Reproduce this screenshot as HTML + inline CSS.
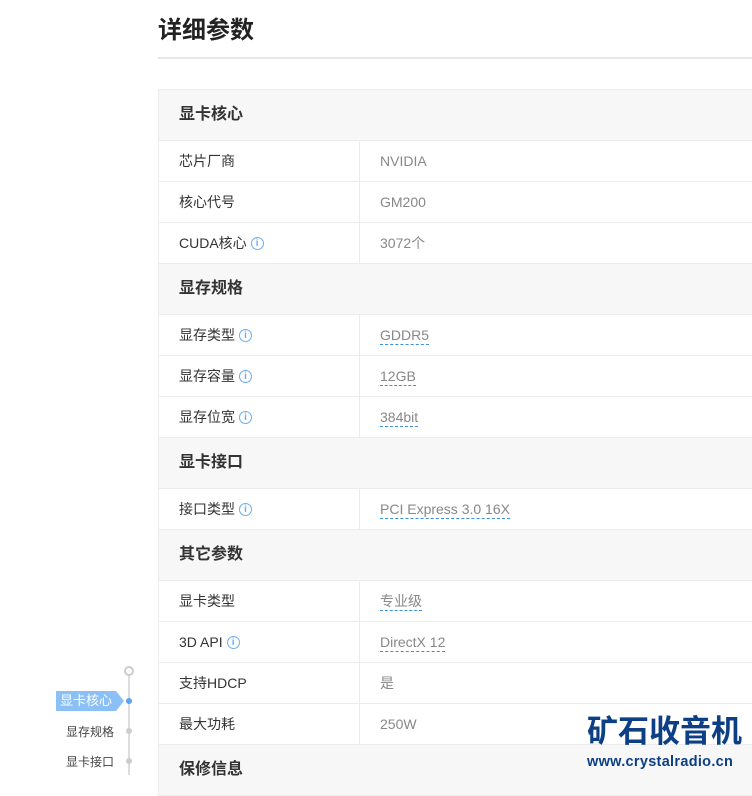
<!DOCTYPE html><html><head><meta charset="utf-8"><style>
*{margin:0;padding:0;box-sizing:border-box}
body{width:752px;height:775px;overflow:hidden;background:#fff;font-family:"Liberation Sans","Noto Sans CJK SC",sans-serif;position:relative}
h1{position:absolute;left:158px;top:10px;font-size:24px;font-weight:bold;color:#222}
.hr{position:absolute;left:158px;top:57px;width:594px;height:2px;background:#e6e6e6}
.tbl{position:absolute;left:158px;top:89px;width:620px;border-left:1px solid #ececec;border-top:1px solid #ececec}
.h{height:51px;background:#f7f7f7;border-bottom:1px solid #ececec;font-size:16px;font-weight:bold;color:#333;line-height:50px;padding-left:20px}
.r{height:41px;border-bottom:1px solid #ececec;display:flex;font-size:14px;line-height:40px}
.r .l{width:201px;border-right:1px solid #ececec;padding-left:20px;color:#333;display:flex;align-items:center}
.r .v{padding-left:20px;color:#888}
.u{border-bottom:1px dashed #3d8fe0;line-height:18px;display:inline-block}
.i{display:inline-block;width:13px;height:13px;border:1px solid #6aaef0;border-radius:50%;color:#6aaef0;font-size:10px;line-height:11px;text-align:center;margin-left:4px;font-weight:bold}
.side{position:absolute;left:128px;top:675px;width:2px;height:100px;background:#ddd}
.c{position:absolute;border-radius:50%}
.tag{position:absolute;left:56px;top:691px;width:60px;height:20px;background:#8bc0f7;color:#fff;font-size:13px;line-height:20px;text-align:center}
.tag:after{content:"";position:absolute;right:-8px;top:0;border-left:8px solid #8bc0f7;border-top:10px solid transparent;border-bottom:10px solid transparent}
.sl{position:absolute;left:66px;font-size:12px;color:#444}
.logo{position:absolute;left:587px;top:710px;font-size:31px;font-weight:bold;color:#0d3f85;letter-spacing:0;font-family:"Noto Sans CJK SC",sans-serif;line-height:38px}
.url{position:absolute;left:587px;top:754px;font-size:14.5px;font-weight:bold;color:#0d3f85;letter-spacing:0.3px}
</style></head><body>
<h1>详细参数</h1><div class="hr"></div>
<div class="tbl">
<div class="h">显卡核心</div>
<div class="r"><div class="l">芯片厂商</div><div class="v">NVIDIA</div></div>
<div class="r"><div class="l">核心代号</div><div class="v">GM200</div></div>
<div class="r"><div class="l">CUDA核心<span class="i">i</span></div><div class="v">3072个</div></div>
<div class="h">显存规格</div>
<div class="r"><div class="l">显存类型<span class="i">i</span></div><div class="v"><span class="u">GDDR5</span></div></div>
<div class="r"><div class="l">显存容量<span class="i">i</span></div><div class="v"><span class="u">12GB</span></div></div>
<div class="r"><div class="l">显存位宽<span class="i">i</span></div><div class="v"><span class="u">384bit</span></div></div>
<div class="h">显卡接口</div>
<div class="r"><div class="l">接口类型<span class="i">i</span></div><div class="v"><span class="u">PCI Express 3.0 16X</span></div></div>
<div class="h">其它参数</div>
<div class="r"><div class="l">显卡类型</div><div class="v"><span class="u">专业级</span></div></div>
<div class="r"><div class="l">3D API<span class="i">i</span></div><div class="v"><span class="u">DirectX 12</span></div></div>
<div class="r"><div class="l">支持HDCP</div><div class="v">是</div></div>
<div class="r"><div class="l">最大功耗</div><div class="v">250W</div></div>
<div class="h">保修信息</div>
</div>
<div class="side"></div>
<div class="c" style="left:124px;top:666px;width:10px;height:10px;border:2px solid #ccc;background:#fff"></div>
<div class="c" style="left:126px;top:698px;width:6px;height:6px;background:#5aa4f0"></div>
<div class="c" style="left:126px;top:728px;width:6px;height:6px;background:#ccc"></div>
<div class="c" style="left:126px;top:758px;width:6px;height:6px;background:#ccc"></div>
<div class="tag">显卡核心</div>
<div class="sl" style="top:723px">显存规格</div>
<div class="sl" style="top:753px">显卡接口</div>
<div class="logo">矿石收音机</div>
<div class="url">www.crystalradio.cn</div>
</body></html>
